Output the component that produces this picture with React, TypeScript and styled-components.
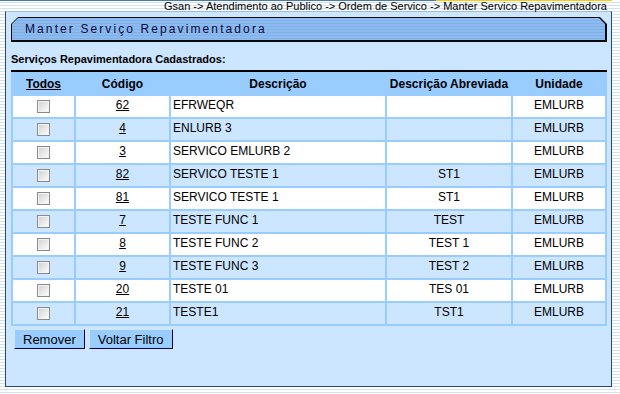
import React from "react";
import styled, { createGlobalStyle } from "styled-components";

const GlobalStyle = createGlobalStyle`
  html, body {
    margin: 0;
    padding: 0;
  }
  body {
    font-family: "Liberation Sans", Arial, sans-serif;
    background: repeating-linear-gradient(
      to bottom,
      #ffffff 0,
      #ffffff 2px,
      #cfe2f1 2px,
      #cfe2f1 3px
    );
  }
`;

interface Servico {
  codigo: string;
  descricao: string;
  abreviada: string;
  unidade: string;
}

const servicos: Servico[] = [
  { codigo: "62", descricao: "EFRWEQR", abreviada: "", unidade: "EMLURB" },
  { codigo: "4", descricao: "ENLURB 3", abreviada: "", unidade: "EMLURB" },
  { codigo: "3", descricao: "SERVICO EMLURB 2", abreviada: "", unidade: "EMLURB" },
  { codigo: "82", descricao: "SERVICO TESTE 1", abreviada: "ST1", unidade: "EMLURB" },
  { codigo: "81", descricao: "SERVICO TESTE 1", abreviada: "ST1", unidade: "EMLURB" },
  { codigo: "7", descricao: "TESTE FUNC 1", abreviada: "TEST", unidade: "EMLURB" },
  { codigo: "8", descricao: "TESTE FUNC 2", abreviada: "TEST 1", unidade: "EMLURB" },
  { codigo: "9", descricao: "TESTE FUNC 3", abreviada: "TEST 2", unidade: "EMLURB" },
  { codigo: "20", descricao: "TESTE 01", abreviada: "TES 01", unidade: "EMLURB" },
  { codigo: "21", descricao: "TESTE1", abreviada: "TST1", unidade: "EMLURB" },
];

export default function App() {
  return (
    <Page>
      <GlobalStyle />
      <TopBar>
        <TopLine />
        <Breadcrumb>
          Gsan -&gt; Atendimento ao Publico -&gt; Ordem de Servico -&gt; Manter
          Servico Repavimentadora
        </Breadcrumb>
      </TopBar>
      <Panel>
        <TitleFrame>
          <TitleInner>
            <TitleText>Manter Serviço Repavimentadora</TitleText>
          </TitleInner>
        </TitleFrame>
        <SectionLabel>Serviços Repavimentadora Cadastrados:</SectionLabel>
        <Table>
          <colgroup>
            <col style={{ width: 61 }} />
            <col style={{ width: 93 }} />
            <col style={{ width: 214 }} />
            <col style={{ width: 124 }} />
            <col style={{ width: 92 }} />
          </colgroup>
          <thead>
            <tr>
              <HeadCell>
                <HeadLink>Todos</HeadLink>
              </HeadCell>
              <HeadCell>Código</HeadCell>
              <HeadCell>Descrição</HeadCell>
              <HeadCell>Descrição Abreviada</HeadCell>
              <HeadCell>Unidade</HeadCell>
            </tr>
          </thead>
          <tbody>
            {servicos.map((s, i) => (
              <tr key={s.codigo}>
                <Cell $alt={i % 2 === 1} $align="center">
                  <Check type="checkbox" />
                </Cell>
                <Cell $alt={i % 2 === 1} $align="center">
                  <CodeLink>{s.codigo}</CodeLink>
                </Cell>
                <Cell $alt={i % 2 === 1} $align="left">
                  <CellText>{s.descricao}</CellText>
                </Cell>
                <Cell $alt={i % 2 === 1} $align="center">
                  {s.abreviada}
                </Cell>
                <Cell $alt={i % 2 === 1} $align="center">
                  {s.unidade}
                </Cell>
              </tr>
            ))}
          </tbody>
        </Table>
        <ButtonRow>
          <Button>Remover</Button>
          <Button>Voltar Filtro</Button>
        </ButtonRow>
      </Panel>
    </Page>
  );
}

const Page = styled.div`
  width: 620px;
  height: 394px;
  overflow: hidden;
`;

const TopBar = styled.div`
  height: 11px;
  width: 612px;
`;

const TopLine = styled.div`
  height: 1px;
  background: linear-gradient(
    to right,
    #4a78b0 0,
    #4a78b0 436px,
    #ffcc00 436px,
    #ffcc00 100%
  );
`;

const Breadcrumb = styled.div`
  text-align: right;
  font-size: 11px;
  line-height: 10px;
  color: #000000;
  padding-right: 5px;
  white-space: nowrap;
`;

const Panel = styled.div`
  margin-left: 5px;
  width: 605px;
  height: 374px;
  background: #cce6ff;
  border: 1px solid #2b4766;
  border-top-color: #9fbcd8;
  display: flex;
  flex-direction: column;
`;

const TitleFrame = styled.div`
  margin: 5px 4px 0 5px;
  height: 25px;
  padding: 1px 2px 2px 1px;
  box-sizing: border-box;
  background: #0a0a0a;
  clip-path: polygon(7px 0, calc(100% - 7px) 0, 100% 7px, 100% 100%, 0 100%, 0 7px);
`;

const TitleInner = styled.div`
  height: 100%;
  display: flex;
  align-items: center;
  padding-left: 13px;
  background: repeating-linear-gradient(
    to bottom,
    #8dbbf0 0,
    #8dbbf0 2px,
    #7fb0e8 2px,
    #7fb0e8 3px
  );
  clip-path: polygon(6px 0, calc(100% - 6px) 0, 100% 6px, 100% 100%, 0 100%, 0 6px);
`;

const TitleText = styled.span`
  font-size: 12px;
  letter-spacing: 2.1px;
  color: #0a0a3a;
`;

const SectionLabel = styled.div`
  margin: 11px 0 0 5px;
  font-size: 11px;
  line-height: 13px;
  font-weight: bold;
  color: #000000;
`;

const Table = styled.table`
  margin: 4px 0 0 5px;
  width: 596px;
  table-layout: fixed;
  border-collapse: separate;
  border-spacing: 2px;
  background: #99ccff;
  border-top: 2px solid #000000;
  font-size: 12px;
`;

const HeadCell = styled.th`
  height: 20px;
  padding: 0;
  font-weight: bold;
  text-align: center;
  background: #99ccff;
  color: #000000;
  white-space: nowrap;
`;

const HeadLink = styled.span`
  text-decoration: underline;
  cursor: pointer;
`;

const Cell = styled.td<{ $alt: boolean; $align: "left" | "center" }>`
  box-sizing: border-box;
  height: 21px;
  padding: 0 0 3px;
  line-height: 14px;
  text-align: ${({ $align }) => $align};
  vertical-align: middle;
  background: ${({ $alt }) => ($alt ? "#cce6ff" : "#ffffff")};
  color: #000000;
  white-space: nowrap;
`;

const CellText = styled.div`
  padding-left: 2px;
`;

const CodeLink = styled.span`
  text-decoration: underline;
  cursor: pointer;
`;

const Check = styled.input`
  appearance: none;
  display: block;
  margin: 3px auto 0;
  width: 13px;
  height: 13px;
  box-sizing: border-box;
  border: 1px solid #8a8a8a;
  background: linear-gradient(135deg, #cfcfcf 0%, #eeeeee 65%, #ffffff 100%);
  box-shadow: inset 0 0 0 1px #f4f4f4;
`;

const ButtonRow = styled.div`
  display: flex;
  gap: 4px;
  margin: 3px 0 0 8px;
`;

const Button = styled.button`
  height: 20px;
  padding: 0 8px;
  font-family: "Liberation Sans", Arial, sans-serif;
  font-size: 13px;
  color: #000000;
  background: #99ccff;
  border: 1px solid;
  border-color: #cfe6ff #000050 #000050 #cfe6ff;
  cursor: pointer;
`;
